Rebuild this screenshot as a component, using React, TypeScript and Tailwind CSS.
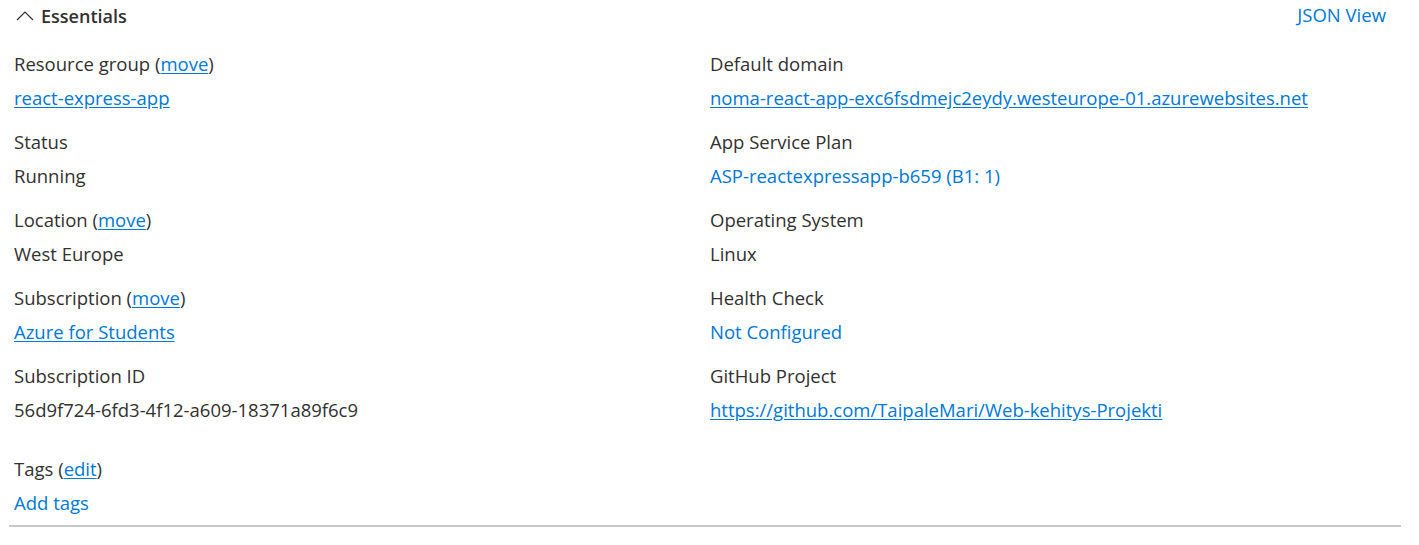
import React from "react";

type Item = {
  label: React.ReactNode;
  value: React.ReactNode;
};

const font = { fontFamily: '"Open Sans", "Segoe UI", sans-serif' };

function Move({ text = "move" }: { text?: string }) {
  return (
    <>
      {" "}(<a className="text-[#0078d4] underline underline-offset-2 cursor-pointer">{text}</a>)
    </>
  );
}

const ulink = "text-[#0078d4] underline underline-offset-2 cursor-pointer";
const link = "text-[#0078d4] cursor-pointer";

export default function App() {
  const left: Item[] = [
    { label: <>Resource group<Move /></>, value: <a className={ulink}>react-express-app</a> },
    { label: "Status", value: "Running" },
    { label: <>Location<Move /></>, value: "West Europe" },
    { label: <>Subscription<Move /></>, value: <a className={ulink}>Azure for Students</a> },
    { label: "Subscription ID", value: "56d9f724-6fd3-4f12-a609-18371a89f6c9" },
  ];

  const right: Item[] = [
    {
      label: "Default domain",
      value: <a className={ulink}>noma-react-app-exc6fsdmejc2eydy.westeurope-01.azurewebsites.net</a>,
    },
    { label: "App Service Plan", value: <a className={link}>ASP-reactexpressapp-b659 (B1: 1)</a> },
    { label: "Operating System", value: "Linux" },
    { label: "Health Check", value: <a className={link}>Not Configured</a> },
    {
      label: "GitHub Project",
      value: <a className={ulink}>https://github.com/TaipaleMari/Web-kehitys-Projekti</a>,
    },
  ];

  const renderCol = (items: Item[]) => (
    <div className="flex flex-col gap-[10px]">
      {items.map((it, i) => (
        <div key={i}>
          <div className="leading-[34px] whitespace-nowrap">{it.label}</div>
          <div className="leading-[34px] whitespace-nowrap">{it.value}</div>
        </div>
      ))}
    </div>
  );

  return (
    <div className="w-[1419px] h-[545px] bg-white text-[#323130] text-[18.5px]" style={font}>
      <div className="pl-[9px] w-[1406px]">
        <div className="h-[47px] flex items-start justify-between">
          <div className="flex items-center gap-[7px] h-[32px] pl-[7px]">
            <svg width="18" height="10" viewBox="0 0 18 10" fill="none">
              <path d="M1 9 L9 1 L17 9" stroke="#323130" strokeWidth="1.2" />
            </svg>
            <span className="font-semibold text-[18px]">Essentials</span>
          </div>
          <a className="text-[#0078d4] leading-[30px] pr-[20px] cursor-pointer">JSON View</a>
        </div>
        <div className="pl-[5px] grid grid-cols-2">
          {renderCol(left)}
          {renderCol(right)}
        </div>
        <div className="pl-[5px] mt-[25px]">
          <div className="leading-[34px]">
            Tags<Move text="edit" />
          </div>
          <div className="leading-[34px]">
            <a className={link}>Add tags</a>
          </div>
        </div>
        <div className="mt-[5px] mr-[5px] border-t-2 border-[#c8c8c8]" />
      </div>
    </div>
  );
}
